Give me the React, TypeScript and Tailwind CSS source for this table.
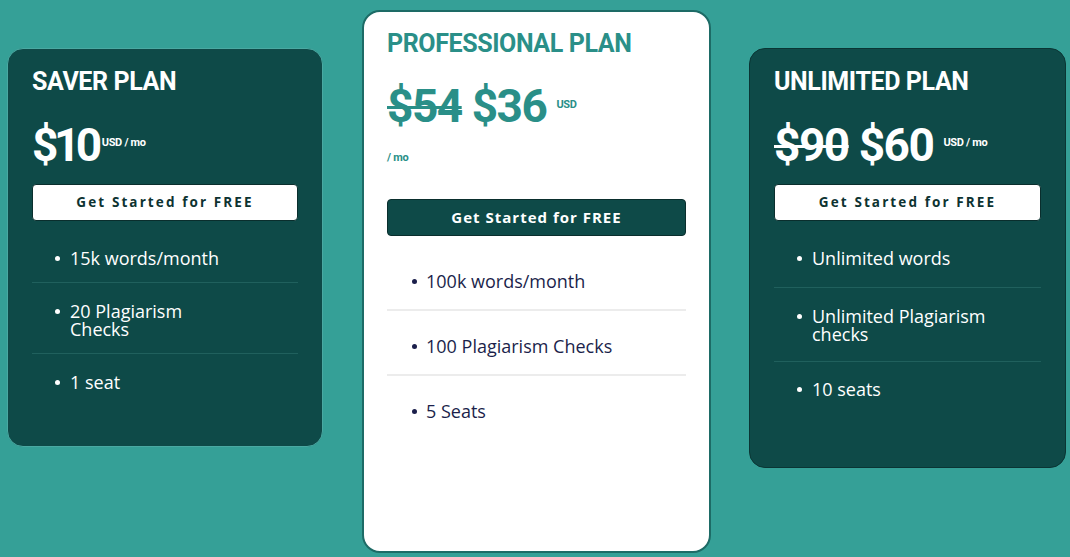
import React from "react";

const title = "font-['Roboto',sans-serif] font-bold text-[25px] leading-[26px] tracking-[-0.4px]";
const price = "font-['Roboto',sans-serif] font-bold text-[46px] leading-[46px] tracking-[-1.5px]";
const small = "font-['Roboto',sans-serif] text-[11px] leading-[11px] font-bold tracking-[-0.3px]";
const body = "font-['Open_Sans',sans-serif] text-[18px] leading-[18px]";

function Dot({ color }: { color: string }) {
  return <span className={`mt-[7px] h-[5px] w-[5px] shrink-0 rounded-full ${color}`} />;
}

export default function App() {
  return (
    <div className="flex h-[557px] w-[1070px] items-start overflow-hidden bg-[#35a097]">
      {/* Saver */}
      <div className="ml-[7px] mt-[48px] h-[399px] w-[316px] rounded-[16px] border border-[#4aa9a2] bg-[#0e4a48] px-[24px] pt-[20px] text-white">
        <div className={title}>SAVER PLAN</div>
        <div className="mt-[27px] flex items-start">
          <span className="font-['Roboto',sans-serif] text-[46px] font-bold leading-[46px] tracking-[-4.5px]">$10</span>
          <span className={`${small} ml-[4px] mt-[15px]`}>USD / mo</span>
        </div>
        <button className="mt-[16px] flex h-[37px] w-full items-center justify-center rounded-[4px] border border-[#0a2e2d] bg-white font-['Open_Sans',sans-serif] text-[13.5px] font-bold tracking-[2.1px] text-[#0d3331]">
          Get Started for FREE
        </button>
        <ul className={`mt-[9px] ${body}`}>
          <li className="flex gap-[10px] border-b border-[#20605d] pb-[15px] pt-[19px] pl-[23px]">
            <Dot color="bg-white" />
            <span>15k words/month</span>
          </li>
          <li className="flex gap-[10px] border-b border-[#20605d] pb-[15px] pt-[19px] pl-[23px]">
            <Dot color="bg-white" />
            <span>20 Plagiarism<br />Checks</span>
          </li>
          <li className="flex gap-[10px] pb-[15px] pt-[19px] pl-[23px]">
            <Dot color="bg-white" />
            <span>1 seat</span>
          </li>
        </ul>
      </div>

      {/* Professional */}
      <div className="ml-[39px] mt-[10px] h-[543px] w-[349px] rounded-[18px] border-2 border-[#1d6b66] bg-white px-[23px] pt-[19px]">
        <div className={`${title} text-[#2a8f88]`}>PROFESSIONAL PLAN</div>
        <div className="mt-[26px] flex items-start text-[#2a8f88]">
          <span className={`${price} line-through decoration-[3px]`}>$54</span>
          <span className={`${price} ml-[10px]`}>$36</span>
          <span className={`${small} ml-[10px] mt-[16px]`}>USD</span>
        </div>
        <div className={`${small} mt-[23px] text-[#2a8f88]`}>/ mo</div>
        <button className="mt-[36px] flex h-[37px] w-full items-center justify-center rounded-[4px] border border-[#0a2e2d] bg-[#0e4a48] font-['Open_Sans',sans-serif] text-[15px] font-bold tracking-[1px] text-white">
          Get Started for FREE
        </button>
        <ul className={`mt-[10px] ${body} text-[#1b1f4b]`}>
          <li className="flex gap-[9px] border-b-2 border-[#ececec] pb-[19px] pt-[26px] pl-[25px]">
            <Dot color="bg-[#1b1f4b]" />
            <span>100k words/month</span>
          </li>
          <li className="flex gap-[9px] border-b-2 border-[#ececec] pb-[19px] pt-[26px] pl-[25px]">
            <Dot color="bg-[#1b1f4b]" />
            <span>100 Plagiarism Checks</span>
          </li>
          <li className="flex gap-[9px] pb-[19px] pt-[26px] pl-[25px]">
            <Dot color="bg-[#1b1f4b]" />
            <span>5 Seats</span>
          </li>
        </ul>
      </div>

      {/* Unlimited */}
      <div className="ml-[38px] mt-[48px] h-[420px] w-[317px] rounded-[16px] border border-[#0a3534] bg-[#0e4a48] px-[24px] pt-[20px] text-white">
        <div className={title}>UNLIMITED PLAN</div>
        <div className="mt-[27px] flex items-start">
          <span className={`${price} line-through decoration-[3px]`}>$90</span>
          <span className={`${price} ml-[10px]`}>$60</span>
          <span className={`${small} ml-[10px] mt-[15px]`}>USD / mo</span>
        </div>
        <button className="mt-[16px] flex h-[37px] w-full items-center justify-center rounded-[4px] border border-[#0a2e2d] bg-white font-['Open_Sans',sans-serif] text-[13.5px] font-bold tracking-[2.1px] text-[#0d3331]">
          Get Started for FREE
        </button>
        <ul className={`mt-[9px] ${body}`}>
          <li className="flex gap-[10px] border-b border-[#20605d] pb-[20px] pt-[19px] pl-[23px]">
            <Dot color="bg-white" />
            <span>Unlimited words</span>
          </li>
          <li className="flex gap-[10px] border-b border-[#20605d] pb-[18px] pt-[19px] pl-[23px]">
            <Dot color="bg-white" />
            <span>Unlimited Plagiarism<br />checks</span>
          </li>
          <li className="flex gap-[10px] pb-[15px] pt-[18px] pl-[23px]">
            <Dot color="bg-white" />
            <span>10 seats</span>
          </li>
        </ul>
      </div>
    </div>
  );
}
